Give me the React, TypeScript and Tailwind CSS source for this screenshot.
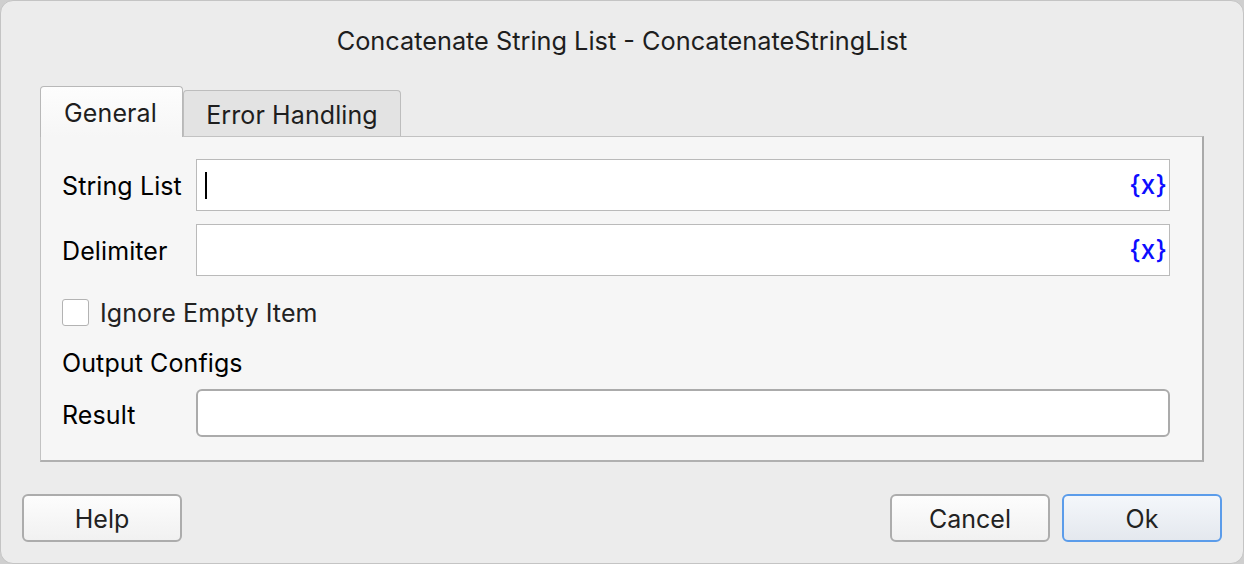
import React from "react";

const font = { fontFamily: "Inter, 'Liberation Sans', sans-serif" };

function VarInput() {
  return (
    <div className="flex-1 h-[52px] bg-white border border-[#bababa] flex items-center justify-end pr-[2px]">
      <span className="text-[#0d0dff] text-[26px] leading-none pb-[1px] font-medium">{"{x}"}</span>
    </div>
  );
}

export default function App() {
  return (
    <div className="w-[1244px] h-[564px] bg-[#cfcfcf]" style={font}>
      <div className="w-full h-full bg-[#ececec] rounded-[13px] border border-[#c4c4c4] flex flex-col text-[#1e1e1e]">
        <div className="h-[78px] flex items-center justify-center text-[25.3px] pt-[1px]">
          Concatenate String List - ConcatenateStringList
        </div>
        <div className="px-[39px]">
          <div className="flex items-end h-[57px]">
            <div className="w-[143px] h-[51px] bg-gradient-to-b from-[#fdfdfd] to-[#f6f6f6] border border-[#b8b8b8] border-b-0 rounded-t-[4px] flex items-center justify-center text-[25px] relative top-[1px] z-10 pr-[2px] pt-[4px] tracking-[0.1px]">
              General
            </div>
            <div className="w-[218px] h-[46px] bg-[#e3e3e3] border border-[#bdbdbd] border-b-0 rounded-t-[4px] flex items-center justify-center text-[25px] pt-[5px] tracking-[0.1px]">
              Error Handling
            </div>
          </div>
          <div className="h-[326px] bg-[#f6f6f6] border-t border-l border-[#c2c2c2] border-r-2 border-b-2 border-r-[#a9a9a9] border-b-[#b0b0b0] pl-[21px] pr-[32px] pt-[22px] text-[25px] text-black tracking-[0.1px]">
            <div className="flex items-center">
              <div className="w-[134px] pt-[4px]">String List</div>
              <div className="flex-1 relative">
                <VarInput />
                <div className="absolute left-[9px] top-[13px] w-[2px] h-[27px] bg-black" />
              </div>
            </div>
            <div className="flex items-center mt-[13px]">
              <div className="w-[134px] pt-[4px]">Delimiter</div>
              <VarInput />
            </div>
            <div className="flex items-center mt-[21px] h-[31px]">
              <div className="w-[27px] h-[27px] bg-white border border-[#b3b3b3] rounded-[3px]" />
              <span className="ml-[11px] text-[#222] pt-[2px]">Ignore Empty Item</span>
            </div>
            <div className="mt-[20px] h-[28px] flex items-center pt-[4px]">Output Configs</div>
            <div className="flex items-center mt-[13px]">
              <div className="w-[134px] pt-[5px]">Result</div>
              <div className="flex-1 h-[48px] bg-white border-2 border-[#ababab] rounded-[6px]" />
            </div>
          </div>
        </div>
        <div className="flex items-center px-[21px] mt-[32px]">
          <button className="w-[160px] h-[48px] rounded-[6px] border-2 border-[#acacac] bg-gradient-to-b from-[#fdfdfd] to-[#f1f1f1] text-[25px] text-[#222] pt-[3px]">
            Help
          </button>
          <div className="flex-1" />
          <button className="w-[160px] h-[48px] rounded-[6px] border-2 border-[#acacac] bg-gradient-to-b from-[#fdfdfd] to-[#f1f1f1] text-[25px] text-[#222] pt-[3px]">
            Cancel
          </button>
          <button className="ml-[12px] w-[160px] h-[48px] rounded-[6px] border-2 border-[#5b9cea] bg-gradient-to-b from-[#f4f7fb] to-[#e4e8ee] text-[25px] text-[#222] pt-[3px]">
            Ok
          </button>
        </div>
      </div>
    </div>
  );
}
